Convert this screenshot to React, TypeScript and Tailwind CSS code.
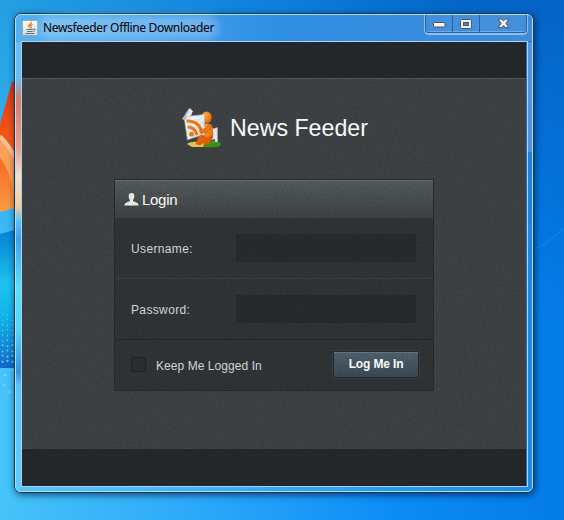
import React from "react";

function Wallpaper() {
  return (
    <svg className="absolute inset-0" width="564" height="520" viewBox="0 0 564 520">
      <defs>
        <linearGradient id="sky" x1="0" y1="0" x2="1" y2="0">
          <stop offset="0" stopColor="#249fe3" />
          <stop offset="0.4" stopColor="#1386de" />
          <stop offset="0.8" stopColor="#0567c8" />
          <stop offset="1" stopColor="#0564c6" />
        </linearGradient>
        <linearGradient id="skyLow" x1="0" y1="0" x2="1" y2="0">
          <stop offset="0" stopColor="#46c3f8" />
          <stop offset="0.35" stopColor="#2ba9fa" />
          <stop offset="0.7" stopColor="#0c8cf6" />
          <stop offset="1" stopColor="#037be6" />
        </linearGradient>
        <linearGradient id="fadeDown" x1="0" y1="0" x2="0" y2="1">
          <stop offset="0" stopColor="#000" />
          <stop offset="0.6" stopColor="#fff" />
        </linearGradient>
        <mask id="lowMask"><rect width="564" height="520" fill="url(#fadeDown)" /></mask>
        <linearGradient id="red" x1="0" y1="0" x2="0" y2="1">
          <stop offset="0" stopColor="#d83412" />
          <stop offset="0.5" stopColor="#fa5c16" />
          <stop offset="1" stopColor="#fb9b49" />
        </linearGradient>
        <linearGradient id="bluePane" x1="0" y1="0" x2="0" y2="1">
          <stop offset="0" stopColor="#057fd1" />
          <stop offset="0.4" stopColor="#1cc3ed" />
          <stop offset="0.65" stopColor="#10b4e8" />
          <stop offset="1" stopColor="#1268c6" />
        </linearGradient>
        <linearGradient id="glassEdge" x1="0" y1="0" x2="0" y2="1">
          <stop offset="0" stopColor="#5ab6f4" />
          <stop offset="0.08" stopColor="#5ab6f4" />
          <stop offset="0.13" stopColor="#dc6a5a" />
          <stop offset="0.24" stopColor="#ec9480" />
          <stop offset="0.3" stopColor="#f3dccb" />
          <stop offset="0.37" stopColor="#f5c48c" />
          <stop offset="0.4" stopColor="#4bbcf6" />
          <stop offset="0.44" stopColor="#2a97e4" />
          <stop offset="0.55" stopColor="#48dcf8" />
          <stop offset="0.64" stopColor="#40d4f6" />
          <stop offset="0.74" stopColor="#2287dc" />
          <stop offset="0.77" stopColor="#46bdf8" />
          <stop offset="1" stopColor="#4fc6fa" />
        </linearGradient>
      </defs>
      <rect width="564" height="520" fill="url(#sky)" />
      <rect width="564" height="520" fill="url(#skyLow)" mask="url(#lowMask)" />
      <path d="M0 124 L12 82 L22 78 V206 L0 212Z" fill="url(#red)" />
      <path d="M0 135 Q14 146 22 168 V206 L15 208 Q12 172 0 158Z" fill="#fba055" />
      <path d="M0 136.5 Q10 146 18 164" fill="none" stroke="#fbc398" strokeWidth="4" />
      <path d="M0 234 L22 228 V368 H0Z" fill="url(#bluePane)" />
      <g fill="#8cd9f8" opacity=".8">
        {Array.from({ length: 30 }, (_, i) => {
          const row = Math.floor(i / 3);
          return <circle key={i} cx={2.5 + (i % 3) * 5} cy={314 + row * 5.2 + (i % 2)} r={0.5 + row * 0.07} />;
        })}
        <g opacity=".7">
          <ellipse cx="5" cy="375" rx="2.4" ry="1.3" />
          <ellipse cx="13" cy="370" rx="2.2" ry="1.2" />
          <ellipse cx="4" cy="385" rx="2" ry="1.1" />
          <ellipse cx="9" cy="392" rx="2" ry="1.1" />
        </g>
      </g>
      <path d="M534 250 Q550 242 564 228" fill="none" stroke="#38a2f2" strokeWidth="1.5" opacity=".25" />
      <rect x="15" y="42" width="7" height="446" fill="url(#glassEdge)" />
      <rect x="527" y="42" width="6" height="110" fill="#4088d8" />
    </svg>
  );
}

/* Fine grain laid over the dark panels */
function Grain() {
  return (
    <svg className="pointer-events-none absolute inset-0" width="504" height="444">
      <filter id="grain" x="0" y="0" width="100%" height="100%">
        <feTurbulence type="fractalNoise" baseFrequency="0.4" numOctaves="2" seed="4" />
        <feColorMatrix values="0 0 0 0 0  0 0 0 0 0  0 0 0 0 0  .45 0 0 0 -.17" />
      </filter>
      <rect width="504" height="444" filter="url(#grain)" opacity=".4" />
    </svg>
  );
}

function JavaIcon() {
  return (
    <svg width="16" height="16" viewBox="0 0 16 16">
      <defs>
        <linearGradient id="tile" x1="0" y1="0" x2="0" y2="1">
          <stop offset="0" stopColor="#fdfdfd" />
          <stop offset="1" stopColor="#d5d9dd" />
        </linearGradient>
      </defs>
      <rect x=".5" y=".5" width="15" height="15" rx="1" fill="url(#tile)" stroke="#8d9aa6" strokeWidth=".7" />
      <path d="M9 1.5 C10 3.5 5.2 4.6 6.5 6.5 L8 8.6 C7.6 7 7.3 6.2 8.5 5.2 C9.5 4.4 9.8 3 9 1.5Z M10.7 4.3 C8.4 5 8.2 6.3 9.1 7.2 L8.8 8.6 C10 7.3 9.2 6.6 9.4 5.8Z" fill="#ee7a1c" stroke="#ee7a1c" strokeWidth=".6" />
      <path d="M4.5 9.5 H11 M5 11.5 H10.5 M11.3 9 Q14 8.4 13 10.2 Q12.4 11 11 11.4 M3.5 13.5 H12.5" fill="none" stroke="#54748f" strokeWidth="1" />
    </svg>
  );
}

function CaptionButtons() {
  return (
    <div className="flex h-[18px] w-[102px] rounded-b-[4px] border border-t-0 border-[#27609f] bg-[#4791dc]/70 shadow-[0_1px_0_1px_#8fc0ee,inset_0_-1px_0_0_#6fa9e6]">
      <div className="flex w-[27px] justify-center border-r border-[#2d609c] pt-[7px]">
        <svg width="13" height="6"><rect x=".5" y=".5" width="11.5" height="4.5" rx=".7" fill="#f7f7f7" stroke="#4d5366" /></svg>
      </div>
      <div className="flex w-[27px] justify-center border-r border-[#2d609c] pt-[4px]">
        <svg width="12" height="10">
          <rect x=".5" y=".5" width="11" height="9" rx="1" fill="#f3f3f3" stroke="#4d5366" />
          <rect x="3.5" y="3.5" width="5" height="3" fill="#3e8cd8" stroke="#4d5366" />
        </svg>
      </div>
      <div className="flex flex-1 justify-center pt-[3px]">
        <svg width="13" height="11">
          <path d="M1.2 1 H4.6 L6.5 3 L8.4 1 H11.8 L8.9 5.3 L11.8 9.6 H8.4 L6.5 7.6 L4.6 9.6 H1.2 L4.1 5.3Z" fill="#f5f5f5" stroke="#4d5366" />
        </svg>
      </div>
    </div>
  );
}

function ReaderLogo() {
  return (
    <svg width="40" height="42" viewBox="0 0 40 42">
      <defs>
        <linearGradient id="paper" x1="0" y1="0" x2="1" y2="1">
          <stop offset="0" stopColor="#ffffff" />
          <stop offset="1" stopColor="#d9dcdf" />
        </linearGradient>
        <radialGradient id="skin" cx=".4" cy=".3" r=".8">
          <stop offset="0" stopColor="#ffad3d" />
          <stop offset="1" stopColor="#e65c05" />
        </radialGradient>
      </defs>
      <path d="M5 37 Q7 34.5 16 34.5 H25 Q30 39 22 40 H10Z" fill="#e6c850" />
      <path d="M21 39 Q26 33 35 34 Q41 36 38 39 Q32 41 22 40Z" fill="#3d9614" />
      <path d="M30 22 L35.5 20.5 V35 L33 35 L33 32 L24 34 L24 29 L31 28Z" fill="#e7e9ea" stroke="#aab0b4" strokeWidth=".6" />
      <path d="M0 12 L7 1 L10 7 L8 12 L4 14Z" fill="#b8bdc1" />
      <path d="M4 10 L8 1 L11 4.5 Q8 8 6 12Z" fill="#eff1f2" />
      <ellipse cx="24.5" cy="10.5" rx="5.2" ry="6" fill="url(#skin)" />
      <path d="M22 17 Q30 15 31 22 L31 31 Q27 35 22 33 L20 25Z" fill="url(#skin)" />
      <path d="M2.5 13 Q4 10 9 9 L22.5 7.5 L22.5 28 Q12 30 5.5 33Z" fill="url(#paper)" stroke="#b7bcc0" strokeWidth=".6" />
      <g fill="none" stroke="#f07a12" strokeWidth="2.8">
        <path d="M4.5 14 Q18 13.5 20 27" />
        <path d="M5.5 20 Q13 20 15 28" />
      </g>
      <circle cx="9.5" cy="27.2" r="2.4" fill="#ef7a14" />
      <path d="M29 19 Q29 26 19 26 Q16 24 19 22 Q24 23 26 18Z" fill="#f17c15" stroke="#cf5408" strokeWidth=".5" />
      <path d="M30 29 Q24 34 22 29 Q17 27 16 31 L14 36 Q15 39 20 37 L22 34 L22 38 L27 37 L29 33Z" fill="#e76409" stroke="#bb4706" strokeWidth=".5" />
    </svg>
  );
}

function Field({ label }: { label: string }) {
  return (
    <div className="flex w-full items-center justify-between pr-[17px] pl-[16px]">
      <label className="pt-[2px] text-[12px] leading-[16px] tracking-[0.36px] text-[#d6d9da]">{label}</label>
      <input className="h-[28px] w-[180px] bg-[#272b2d] outline-none" />
    </div>
  );
}

function LoginCard() {
  return (
    <div className="mx-auto flex h-[212px] w-[320px] flex-col border border-[#272a2d] bg-[#303436]">
      <div className="flex h-[38px] items-center border-t border-[#6b7274] bg-linear-to-b from-[#525b5d] to-[#3d4243] pl-[9px]">
        <svg width="15" height="13" viewBox="0 0 15 13">
          <path d="M7.5 0 C9.8 0 10.6 1.5 10.3 4 C10.1 5.5 9.5 6.4 9 7 V8 C10 8.8 14.3 9.2 14.5 12 V12.5 H.5 V12 C.7 9.2 5 8.8 6 8 V7 C5.5 6.4 4.9 5.5 4.7 4 C4.4 1.5 5.2 0 7.5 0Z" fill="#ededed" />
        </svg>
        <h2 className="ml-[3px] text-[15px] leading-[18px] tracking-[-0.3px] text-white">Login</h2>
      </div>
      <div className="flex h-[61px] items-center border-b border-[#3b3e40]"><Field label="Username:" /></div>
      <div className="flex h-[61px] items-center border-b border-[#232729]"><Field label="Password:" /></div>
      <div className="flex flex-1 items-center pr-[14px] pb-px pl-[16px]">
        <span className="h-[15px] w-[15px] rounded-[2px] border border-[#202326] bg-[#2b2f31]" />
        <span className="ml-[10px] pt-[2px] text-[12px] leading-[16px] tracking-[0.06px] text-[#d6d9da]">Keep Me Logged In</span>
        <button className="ml-auto h-[27px] w-[86px] border border-[#23282b] bg-linear-to-b from-[#4f616e] to-[#394a55] text-[12px] leading-[25px] font-bold tracking-[-0.15px] text-white shadow-[0_0_0_1px_#3a3e40,inset_0_1px_0_#667783]">
          Log Me In
        </button>
      </div>
    </div>
  );
}

export default function App() {
  return (
    <div className="relative h-[520px] w-[564px] overflow-hidden pt-[13px] pl-[14px] font-['Liberation_Sans',Arial,sans-serif]">
      <Wallpaper />
      <div className="relative h-[480px] w-[520px] rounded-[7px] border border-[#12395a] shadow-[1px_2px_7px_rgba(0,15,45,0.65)]">
        <div className="h-full w-full rounded-[6px] border border-[#b2e0fa] bg-white/10">
          <div className="flex h-[26px] justify-between rounded-t-[5px] bg-linear-to-r from-[#5db3f2]/80 via-[#3190e6]/80 to-[#4690dd]/80 pr-[5px]">
            <div className="flex h-full items-center">
              <span className="ml-[6px]"><JavaIcon /></span>
              <span className="mb-[2px] ml-[5px] rounded-full bg-white/25 text-[12px] leading-[15px] tracking-[-0.33px] whitespace-nowrap text-black shadow-[0_0_9px_5px_rgba(255,255,255,0.25)] font-['Noto_Sans',sans-serif]">
                Newsfeeder Offline Downloader
              </span>
            </div>
            <CaptionButtons />
          </div>
          <div className="ml-[5px] h-[446px] w-[507px] border border-[#a5d5f6] bg-[#2d6fae] pr-px">
            <div className="relative flex h-full flex-col bg-[#3e4244]">
              <div className="h-[36px] bg-[#24282c]" />
              <main className="flex-1 border-t border-[#54585a]">
                <div className="flex h-[100px] items-center pb-[2px] pl-[160px]">
                  <ReaderLogo />
                  <h1 className="ml-[8px] text-[23.2px] leading-[28px] text-white">News Feeder</h1>
                </div>
                <LoginCard />
              </main>
              <div className="h-[37px] bg-[#24282c]" />
              <Grain />
            </div>
          </div>
        </div>
      </div>
    </div>
  );
}
